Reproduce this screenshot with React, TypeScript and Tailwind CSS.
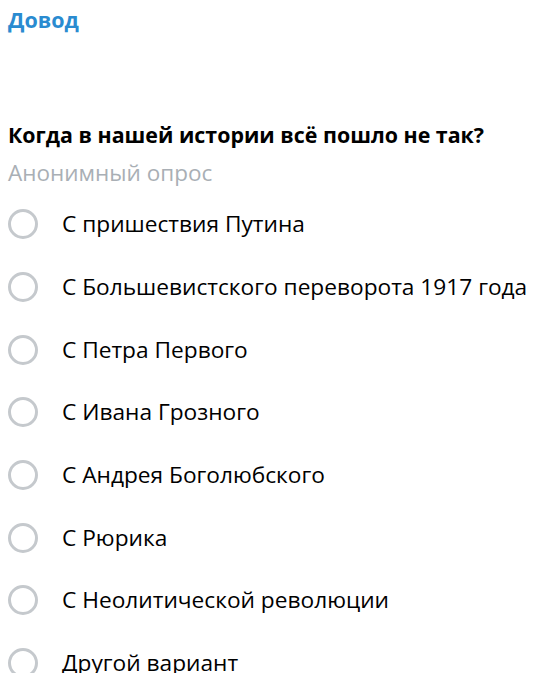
const options = [
  "С пришествия Путина",
  "С Большевистского переворота 1917 года",
  "С Петра Первого",
  "С Ивана Грозного",
  "С Андрея Боголюбского",
  "С Рюрика",
  "С Неолитической революции",
  "Другой вариант",
];

export default function App() {
  return (
    <div className="h-[673px] overflow-hidden bg-white px-2 pt-[5px] font-['Open_Sans',sans-serif] text-black">
      <div className="text-[21.5px] font-bold leading-[30px] text-[#2a8bd0]">Довод</div>

      <div className="mt-[85px] whitespace-nowrap text-[21.4px] font-bold leading-[30px]">
        Когда в нашей истории всё пошло не так?
      </div>
      <div className="mt-[8px] text-[22.5px] leading-[30px] text-[#a9afb5]">Анонимный опрос</div>

      <div className="mt-[5px] flex flex-col">
        {options.map((o) => (
          <div key={o} className="flex h-[62.7px] items-center">
            <span className="h-[30px] w-[30px] shrink-0 rounded-full border-[3px] border-[#c5c9cd]" />
            <span className="ml-[24px] whitespace-nowrap text-[22.7px] leading-[30px]">{o}</span>
          </div>
        ))}
      </div>
    </div>
  );
}
